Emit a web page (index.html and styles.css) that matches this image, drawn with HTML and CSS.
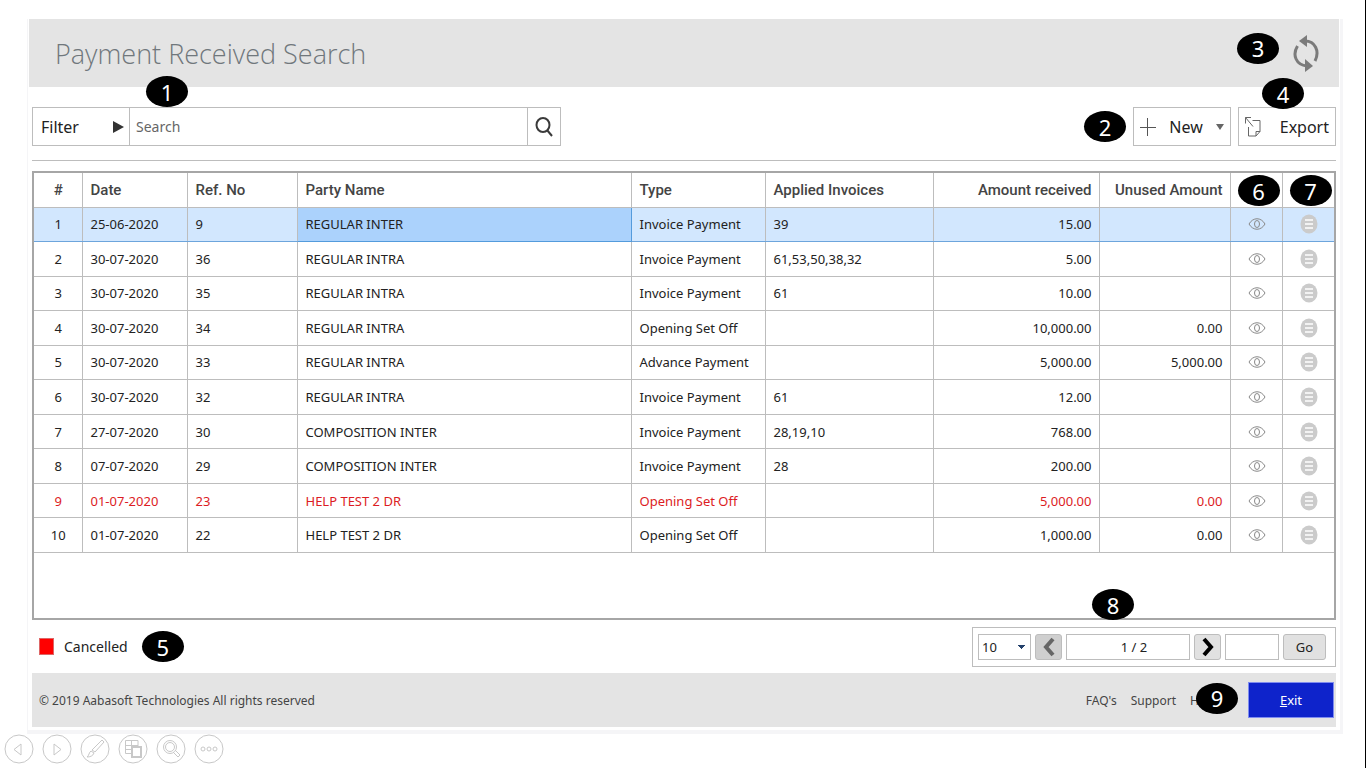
FILE: index.html
```html
<!DOCTYPE html>
<html lang="en">
<head>
    <meta charset="UTF-8" />
    <meta name="viewport" content="width=device-width, initial-scale=1.0"/>
    <title>Payment Received Search</title>
    <link rel="stylesheet" href="styles.css">
</head>
<body>
<svg class="sprite" aria-hidden="true">
    <symbol id="eye" viewBox="0 0 18 14">
        <path d="M1 7C5 0 13 0 17 7C13 14 5 14 1 7Z"/>
        <ellipse cx="9" cy="7" rx="2.500" ry="3.500"/>
    </symbol>
    <symbol id="menu" viewBox="0 0 18 20">
        <ellipse cx="9" cy="10" rx="8.500" ry="9.500" fill="#cbcbcb"/>
        <path d="M5 6h8M5 10h8M5 14h8" stroke="#f2f2f2" stroke-width="2"/>
    </symbol>
</svg>
<div class="app">
    <header class="top">
        <h1>Payment Received Search</h1>
        <div class="top_right">
            <span class="badge">3</span>
            <button class="icon_btn" aria-label="Refresh">
                <svg width="26" height="38" viewBox="0 0 26 38" fill="none" stroke="#7b7b7b" stroke-width="3">
                    <path d="M4.500 12C-1 21 3 31 14 32"/>
                    <path d="M12 7C22 7 27 17 22 27"/>
                    <path d="M12 25v13l8-6z" fill="#7b7b7b" stroke="none"/>
                    <path d="M14 1v12L6 7z" fill="#7b7b7b" stroke="none"/>
                </svg>
            </button>
        </div>
    </header>
    <main class="content">
        <div class="toolbar">
            <div class="search">
                <button class="filter">Filter
                    <svg width="11" height="12" viewBox="0 0 11 12"><path d="M0 0l11 6L0 12z" fill="#333"/></svg>
                </button>
                <input type="text" class="search_text" placeholder="Search" aria-label="Search">
                <button class="search_btn" aria-label="Run search">
                    <svg width="18" height="20" viewBox="0 0 18 20" fill="none" stroke="#3a3a3a" stroke-width="2"><ellipse cx="8" cy="8" rx="6.500" ry="7"/><path d="M12 13l5 6"/></svg>
                </button>
                <span class="badge badge_search">1</span>
            </div>
            <div class="actions">
                <span class="badge">2</span>
                <button class="action">
                    <svg width="16" height="18" viewBox="0 0 16 18" stroke="#555"><path d="M7.500 0v18M0 9.500h16"/></svg>
                    New
                    <svg width="8" height="6" viewBox="0 0 8 6"><path d="M0 0h8L4 6z" fill="#666"/></svg>
                </button>
                <button class="action">
                    <svg width="16" height="20" viewBox="0 0 16 20" fill="none" stroke="#666"><path d="M7.500 3.500h7.500v11l-4 4.500H3.500V10M15 14.500h-4V19M.5 6.500v-6H6M.5.5l7.500 9"/></svg>
                    Export
                </button>
                <span class="badge badge_export">4</span>
            </div>
        </div>
        <div class="grid">
            <table>
                <colgroup>
                    <col class="c_no"><col class="c_date"><col class="c_ref"><col><col class="c_type">
                    <col class="c_inv"><col class="c_amt"><col class="c_unused"><col class="c_icon"><col class="c_icon">
                </colgroup>
                <thead>
                    <tr>
                        <th class="mid">#</th><th>Date</th><th>Ref. No</th><th>Party Name</th><th>Type</th>
                        <th>Applied Invoices</th><th class="num">Amount received</th><th class="num">Unused Amount</th>
                        <th class="mark"><span class="badge">6</span></th><th class="mark"><span class="badge">7</span></th>
                    </tr>
                </thead>
                <tbody id="rows"></tbody>
            </table>
        </div>
        <div class="bottom">
            <div class="legend">
                <span class="red_box"></span>
                <span>Cancelled</span>
                <span class="badge">5</span>
            </div>
            <div class="pager">
                <select aria-label="Rows per page"><option>10</option></select>
                <button class="page_btn off" aria-label="Previous page">
                    <svg width="12" height="20" viewBox="0 0 12 20" fill="none" stroke="#666" stroke-width="4"><path d="M10 2L3 10l7 8"/></svg>
                </button>
                <input type="text" class="page_now" value="1 / 2" aria-label="Current page" readonly>
                <button class="page_btn" aria-label="Next page">
                    <svg width="12" height="20" viewBox="0 0 12 20" fill="none" stroke="#000" stroke-width="4"><path d="M2 2l7 8-7 8"/></svg>
                </button>
                <input type="text" class="page_go" aria-label="Go to page">
                <button class="go">Go</button>
                <span class="badge badge_pager">8</span>
            </div>
        </div>
        <footer class="foot">
            <p>© 2019 Aabasoft Technologies All rights reserved</p>
            <nav class="links">
                <a href="#">FAQ's</a>
                <a href="#">Support</a>
                <a href="#" class="help">H<span class="badge badge_help">9</span></a>
                <button class="exit"><u>E</u>xit</button>
            </nav>
        </footer>
    </main>
</div>
<div class="slide_bar">
    <button aria-label="Previous slide"><svg viewBox="0 0 30 30"><circle cx="15" cy="15" r="14"/><path d="M17 10v11l-7-5.500z"/></svg></button>
    <button aria-label="Next slide"><svg viewBox="0 0 30 30"><circle cx="15" cy="15" r="14"/><path d="M12 10v11l7-5.500z"/></svg></button>
    <button aria-label="Pen"><svg viewBox="0 0 30 30"><circle cx="15" cy="15" r="14"/><path d="M22 6l2 2-9 10-3-2zM11 17l3 2c-1 3-4 4-7 4 2-1 2-5 4-6z"/></svg></button>
    <button aria-label="All slides"><svg viewBox="0 0 30 30"><circle cx="15" cy="15" r="14"/><path d="M20 12V6.500H7.500v13H13M13.500 6.500v5.500M7.500 11.500H20M7.500 15.500H13"/><path d="M14 13h9v10h-9z" stroke-width="2"/></svg></button>
    <button aria-label="Zoom"><svg viewBox="0 0 30 30"><circle cx="15" cy="15" r="14"/><circle cx="14" cy="13" r="6.500"/><circle cx="14" cy="13" r="4.500"/><path d="M19 16l5 5-2 2-5-5"/></svg></button>
    <button aria-label="More"><svg viewBox="0 0 30 30"><circle cx="15" cy="15" r="14"/><circle cx="9" cy="15" r="2"/><circle cx="15" cy="15" r="2"/><circle cx="21" cy="15" r="2"/></svg></button>
</div>
<script src="script.js"></script>
</body>
</html>
```
FILE: styles.css
```css
* {
    margin: 0;
    padding: 0;
    box-sizing: border-box;
}
body {
    display: flex;
    flex-direction: column;
    min-height: 100vh;
    border-right: 1px solid #000;
    background: #fff;
    font-family: "Noto Sans", "Open Sans", sans-serif;
    font-size: 13px;
    color: #222;
}
button, input, select {
    font: inherit;
    color: inherit;
    background: #fff;
    border: 1px solid #bdbdbd;
}
.sprite {
    display: none;
}
.app {
    flex: 1;
    display: flex;
    flex-direction: column;
    margin: 19px 22px 0 27px;
    border: solid #f5f5f7;
    border-width: 0 3px 4px 1px;
}
.badge {
    display: flex;
    align-items: center;
    justify-content: center;
    width: 42px;
    height: 31px;
    border-radius: 50%;
    background: #000;
    color: #fff;
    font-family: "Noto Sans", sans-serif;
    font-size: 22px;
    font-weight: 400;
    line-height: 30px;
    z-index: 1;
}
.top {
    display: flex;
    align-items: center;
    justify-content: space-between;
    height: 68px;
    margin: 0 1px;
    padding: 0 20px 0 26px;
    background: #e4e4e4;
}
.top h1 {
    font-family: "Open Sans", sans-serif;
    font-size: 27px;
    font-weight: 300;
    color: #70777c;
}
.top_right {
    display: flex;
    align-items: center;
    gap: 14px;
}
.top_right .badge {
    margin-bottom: 10px;
}
.icon_btn {
    height: 38px;
    border: none;
    background: none;
}
.content {
    flex: 1;
    display: flex;
    flex-direction: column;
    padding: 0 4px 3px;
}
.toolbar {
    display: flex;
    justify-content: space-between;
    margin-top: 20px;
    padding-bottom: 14px;
    border-bottom: 1px solid #bdbdbd;
}
.search {
    position: relative;
    display: flex;
    width: 529px;
    height: 39px;
}
.badge_search {
    position: absolute;
    left: 114px;
    top: -31px;
}
.filter {
    display: flex;
    align-items: center;
    justify-content: space-between;
    width: 98px;
    padding: 0 5px 0 8px;
    font-size: 16px;
}
.search_text {
    flex: 1;
    min-width: 0;
    padding: 0 6px;
    border-width: 1px 0;
    font-size: 14px;
}
.search_text::placeholder {
    color: #666;
}
.search_btn {
    display: flex;
    align-items: center;
    justify-content: center;
    width: 34px;
}
.actions {
    position: relative;
    display: flex;
    align-items: center;
    gap: 7px;
}
.action {
    display: flex;
    align-items: center;
    justify-content: space-between;
    width: 98px;
    height: 39px;
    padding: 0 6px;
    font-size: 16px;
}
.badge_export {
    position: absolute;
    right: 32px;
    top: -29px;
}
.grid {
    flex: 1;
    margin-top: 10px;
    border: 2px solid #a6a6a6;
}
table {
    width: 100%;
    height: 380px;
    table-layout: fixed;
    border-collapse: collapse;
}
.c_no { width: 48px; }
.c_date { width: 105px; }
.c_ref { width: 110px; }
.c_type { width: 134px; }
.c_inv { width: 168px; }
.c_amt { width: 166px; }
.c_unused { width: 131px; }
.c_icon { width: 52px; }
th, td {
    padding: 0 7px 0 8px;
    border: 1px solid #bdbdbd;
    text-align: left;
    white-space: nowrap;
}
tr > :first-child {
    border-left: none;
}
tr > :last-child {
    border-right: none;
}
th {
    height: 34px;
    border-top: none;
    font-family: Roboto, sans-serif;
    font-size: 15px;
    font-weight: 500;
    color: #444;
}
td svg {
    display: block;
    margin: auto;
}
.mid {
    text-align: center;
}
.num {
    text-align: right;
}
.mark {
    position: relative;
}
.mark .badge {
    position: absolute;
    left: 7px;
    top: 2px;
}
.eye {
    fill: none;
    stroke: #888;
}
.selected td {
    background: #d2e7fe;
    border-bottom-color: #6da5dc;
}
.selected .current {
    background: #abd2fc;
    border-color: #549bdc;
}
.cancelled {
    color: #dc1c24;
}
.bottom {
    display: flex;
    align-items: flex-start;
    justify-content: space-between;
    padding: 7px 0 6px;
}
.legend {
    display: flex;
    align-items: center;
    gap: 10px;
    padding: 4px 7px;
    font-size: 14px;
}
.legend .badge {
    margin-left: 4px;
}
.red_box {
    width: 15px;
    height: 17px;
    background: #f00;
    border: 1px solid #d66;
}
.pager {
    position: relative;
    display: flex;
    align-items: center;
    gap: 4px;
    width: 364px;
    height: 40px;
    padding: 0 9px 0 5px;
    border: 1px solid #bdbdbd;
}
.pager select, .pager input, .pager button {
    height: 26px;
}
.pager select {
    width: 53px;
    padding: 0 3px;
    appearance: none;
    background: conic-gradient(from -45deg at 50% 100%, #23406b 90deg, transparent 0) no-repeat right 5px center / 7px 4px;
    /* small drop-down arrow */
    background-image: conic-gradient(from -45deg at 50% 100%, #23406b 90deg, transparent 0);
}
.page_btn {
    display: flex;
    align-items: center;
    justify-content: center;
    width: 27px;
    border-radius: 3px;
    background: #e1e1e1;
}
.off {
    background: #cfcfcf;
}
.page_now {
    flex: 1;
    min-width: 0;
    padding-left: 12px;
    text-align: center;
}
.page_go {
    width: 54px;
}
.go {
    width: 43px;
    border-radius: 3px;
    background: #e1e1e1;
}
.badge_pager {
    position: absolute;
    left: 119px;
    top: -39px;
}
.foot {
    display: flex;
    align-items: center;
    justify-content: space-between;
    height: 54px;
    padding: 0 2px 0 7px;
    background: #e4e4e4;
    font-size: 12px;
    color: #444;
}
.links {
    display: flex;
    align-items: center;
    gap: 14px;
}
.links a {
    color: inherit;
    text-decoration: none;
}
.help {
    position: relative;
    width: 44px;
}
.badge_help {
    position: absolute;
    left: 6px;
    top: -9px;
}
.exit {
    width: 86px;
    height: 36px;
    border: 1px solid #7f8cf0;
    background: #0e23cb;
    color: #fff;
    font-size: 13px;
}
.slide_bar {
    display: flex;
    gap: 8px;
    padding: 0 4px 4px;
}
.slide_bar button {
    height: 30px;
    border: none;
    background: none;
}
.slide_bar svg {
    width: 30px;
    height: 30px;
    fill: none;
    stroke: #c8c8c8;
}
```
FILE: script.js
```js
// date, ref no, party, type, applied invoices, amount received, unused amount
const payments = [
    ['25-06-2020', '9', 'REGULAR INTER', 'Invoice Payment', '39', '15.00', ''],
    ['30-07-2020', '36', 'REGULAR INTRA', 'Invoice Payment', '61,53,50,38,32', '5.00', ''],
    ['30-07-2020', '35', 'REGULAR INTRA', 'Invoice Payment', '61', '10.00', ''],
    ['30-07-2020', '34', 'REGULAR INTRA', 'Opening Set Off', '', '10,000.00', '0.00'],
    ['30-07-2020', '33', 'REGULAR INTRA', 'Advance Payment', '', '5,000.00', '5,000.00'],
    ['30-07-2020', '32', 'REGULAR INTRA', 'Invoice Payment', '61', '12.00', ''],
    ['27-07-2020', '30', 'COMPOSITION INTER', 'Invoice Payment', '28,19,10', '768.00', ''],
    ['07-07-2020', '29', 'COMPOSITION INTER', 'Invoice Payment', '28', '200.00', ''],
    ['01-07-2020', '23', 'HELP TEST 2 DR', 'Opening Set Off', '', '5,000.00', '0.00'],
    ['01-07-2020', '22', 'HELP TEST 2 DR', 'Opening Set Off', '', '1,000.00', '0.00']
];
const cancelled = ['23'];

document.getElementById('rows').innerHTML = payments.map((p, i) => {
    const state = i === 0 ? 'selected' : cancelled.includes(p[1]) ? 'cancelled' : '';
    return `<tr class="${state}">
        <td class="mid">${i + 1}</td><td>${p[0]}</td><td>${p[1]}</td><td class="current">${p[2]}</td>
        <td>${p[3]}</td><td>${p[4]}</td><td class="num">${p[5]}</td><td class="num">${p[6]}</td>
        <td><svg class="eye" width="18" height="14"><use href="#eye"/></svg></td>
        <td><svg width="18" height="20"><use href="#menu"/></svg></td>
    </tr>`;
}).join('');
```
